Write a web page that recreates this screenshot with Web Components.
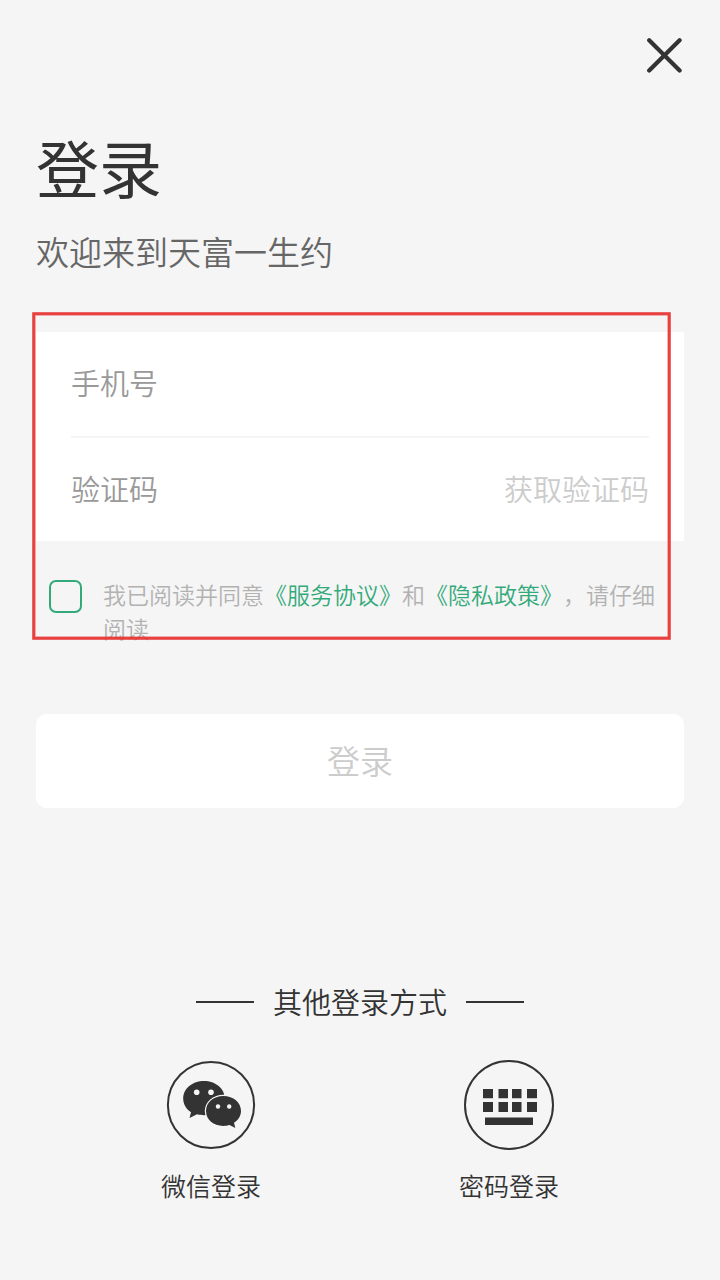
<!DOCTYPE html>
<html lang="zh-CN">
<head>
<meta charset="utf-8">
<title>登录</title>
<style>
html,body{margin:0;padding:0;background:#f5f5f5}
body{width:720px;height:1280px;overflow:hidden;font-family:"Noto Sans CJK SC","Noto Sans",sans-serif;font-weight:350;color:#333;text-spacing-trim:space-all}
</style>
</head>
<body>
<login-page></login-page>
<script>
const define = (name, html) => customElements.define(name, class extends HTMLElement {
  constructor() {
    super();
    this.attachShadow({ mode: 'open' }).innerHTML = html;
  }
});

define('close-button', `
<style>:host{display:block;width:36px;height:36px}svg{display:block}</style>
<svg width="36" height="36" viewBox="0 0 36 36" fill="none" stroke="#333" stroke-width="4.200"><path d="M3.200 3.200 33.600 33.600M33.600 3.200 3.200 33.600" stroke-linecap="round"/></svg>`);

define('page-heading', `
<style>
:host{display:block}
h1{margin:0;font-size:63px;line-height:80px;font-weight:400}
p{margin:22px 0 0;font-size:33px;line-height:46px;color:#666}
</style>
<h1><slot name="title"></slot></h1><p><slot></slot></p>`);

define('field-row', `
<style>
:host{display:flex;justify-content:space-between;box-sizing:border-box;height:104px;padding-top:29px;font-size:29px;line-height:42px;color:#999}
.action{color:#ccc}
</style>
<span><slot></slot></span><span class="action"><slot name="action"></slot></span>`);

define('form-card', `
<style>
:host{display:block;box-sizing:border-box;height:209px;padding:0 35px;background:#fff}
::slotted(field-row:first-child){height:106px!important;border-bottom:2px solid #f5f5f5}
</style>
<slot></slot>`);

define('agreement-line', `
<style>
:host{display:flex;font-size:23px;line-height:34px;color:#b2b2b2}
.box{box-sizing:border-box;flex:none;width:33px;height:33px;border:2px solid #33aa7a;border-radius:7px;margin:3px 21px 0 0}
::slotted(b){font-weight:350;color:#33aa7a}
</style>
<span class="box"></span><span><slot></slot></span>`);

define('submit-button', `
<style>:host{display:block;box-sizing:border-box;height:94px;padding-top:23px;text-align:center;border-radius:11px;background:#fff;color:#ccc;font-size:33px;line-height:46px}</style>
<slot></slot>`);

define('line-divider', `
<style>
:host{display:flex;align-items:center;justify-content:center;gap:19px;font-size:29px;line-height:42px}
i{width:58px;height:2px;margin-top:2px;background:#333}
</style>
<i></i><span><slot></slot></span><i></i>`);

define('login-method', `
<style>
:host{display:flex;flex-direction:column;align-items:center;width:100px;font-size:25px;line-height:36px;white-space:nowrap}
.icon{height:90px;margin-bottom:17px}
</style>
<div class="icon"><slot name="icon"></slot></div><span><slot></slot></span>`);

define('wechat-icon', `
<style>:host{display:block}svg{display:block}</style>
<svg width="90" height="90" viewBox="0 0 90 90">
<circle cx="45" cy="45" r="43.1" fill="none" stroke="#333" stroke-width="2"/>
<path fill="#333" d="M38 21C26.500 21 17.200 28.500 17.200 38.500C17.200 44.500 20.500 49.200 25 52.200L23.500 58L31 54.300C33.500 55 36 55.200 38 55.200C49 55.200 58.800 48 58.800 38.500C58.800 28.500 49.500 21 38 21Z"/>
<ellipse cx="57.300" cy="51" rx="18.500" ry="16.200" fill="#f5f5f5"/>
<path fill="#333" d="M57.300 36C47.500 36 40 42.500 40 51C40 59.500 47.500 65.900 57.300 65.900C59.800 65.900 61.800 65.500 63.500 65L69.300 68L68 62.800C72.200 60 75 56 75 51C75 42.500 67.500 36 57.300 36Z"/>
<g fill="#f5f5f5"><circle cx="30.700" cy="32.200" r="2.800"/><circle cx="45" cy="32.200" r="2.800"/><circle cx="52" cy="46.500" r="2.200"/><circle cx="63.200" cy="46.500" r="2.200"/></g>
</svg>`);

define('keyboard-icon', `
<style>:host{display:block}svg{display:block}</style>
<svg width="90" height="90" viewBox="0 0 90 90">
<circle cx="45" cy="45" r="44" fill="none" stroke="#333" stroke-width="2"/>
<path fill="#333" d="M19 29h10v9.300H19zM34.500 29H44v9.300H34.500zM48 29h9.500v9.300H48zM63 29h10v9.300H63zM19 42h10v10H19zM34.500 42H44v10H34.500zM48 42h9.500v10H48zM63 42h10v10H63zM21 57.500h48V65H21z"/>
</svg>`);

define('highlight-frame', `
<style>:host{position:absolute;left:0;top:0;pointer-events:none}svg{display:block}</style>
<svg width="640" height="329" viewBox="0 0 640 329"><rect x="1.800" y="1.800" width="635.400" height="324.400" fill="none" stroke="#e63331" stroke-opacity=".93" stroke-width="3.200"/></svg>`);

define('login-page', `
<style>
:host{display:flex;flex-direction:column;box-sizing:border-box;width:720px;height:1280px;padding:37px 36px 0;background:#f5f5f5}
close-button{align-self:flex-end;margin-right:2px}
page-heading{margin-top:53px}
.form{position:relative;margin-top:58px}
agreement-line{margin:36px 24px 0 13px}
highlight-frame{left:-4px;top:-20px}
submit-button{margin-top:69px}
line-divider{margin-top:172px}
.methods{display:flex;justify-content:space-between;padding:0 125px;margin-top:38px}
</style>
<close-button></close-button>
<page-heading><span slot="title">登录</span>欢迎来到天富一生约</page-heading>
<div class="form">
<form-card><field-row>手机号</field-row><field-row>验证码<span slot="action">获取验证码</span></field-row></form-card>
<agreement-line><span>我已阅读并同意</span><b>《服务协议》</b><span>和</span><b>《隐私政策》</b><span>，请仔细</span><br><span>阅读</span></agreement-line>
<highlight-frame></highlight-frame>
</div>
<submit-button>登录</submit-button>
<line-divider>其他登录方式</line-divider>
<div class="methods">
<login-method><wechat-icon slot="icon"></wechat-icon>微信登录</login-method>
<login-method><keyboard-icon slot="icon"></keyboard-icon>密码登录</login-method>
</div>`);
</script>
</body>
</html>
